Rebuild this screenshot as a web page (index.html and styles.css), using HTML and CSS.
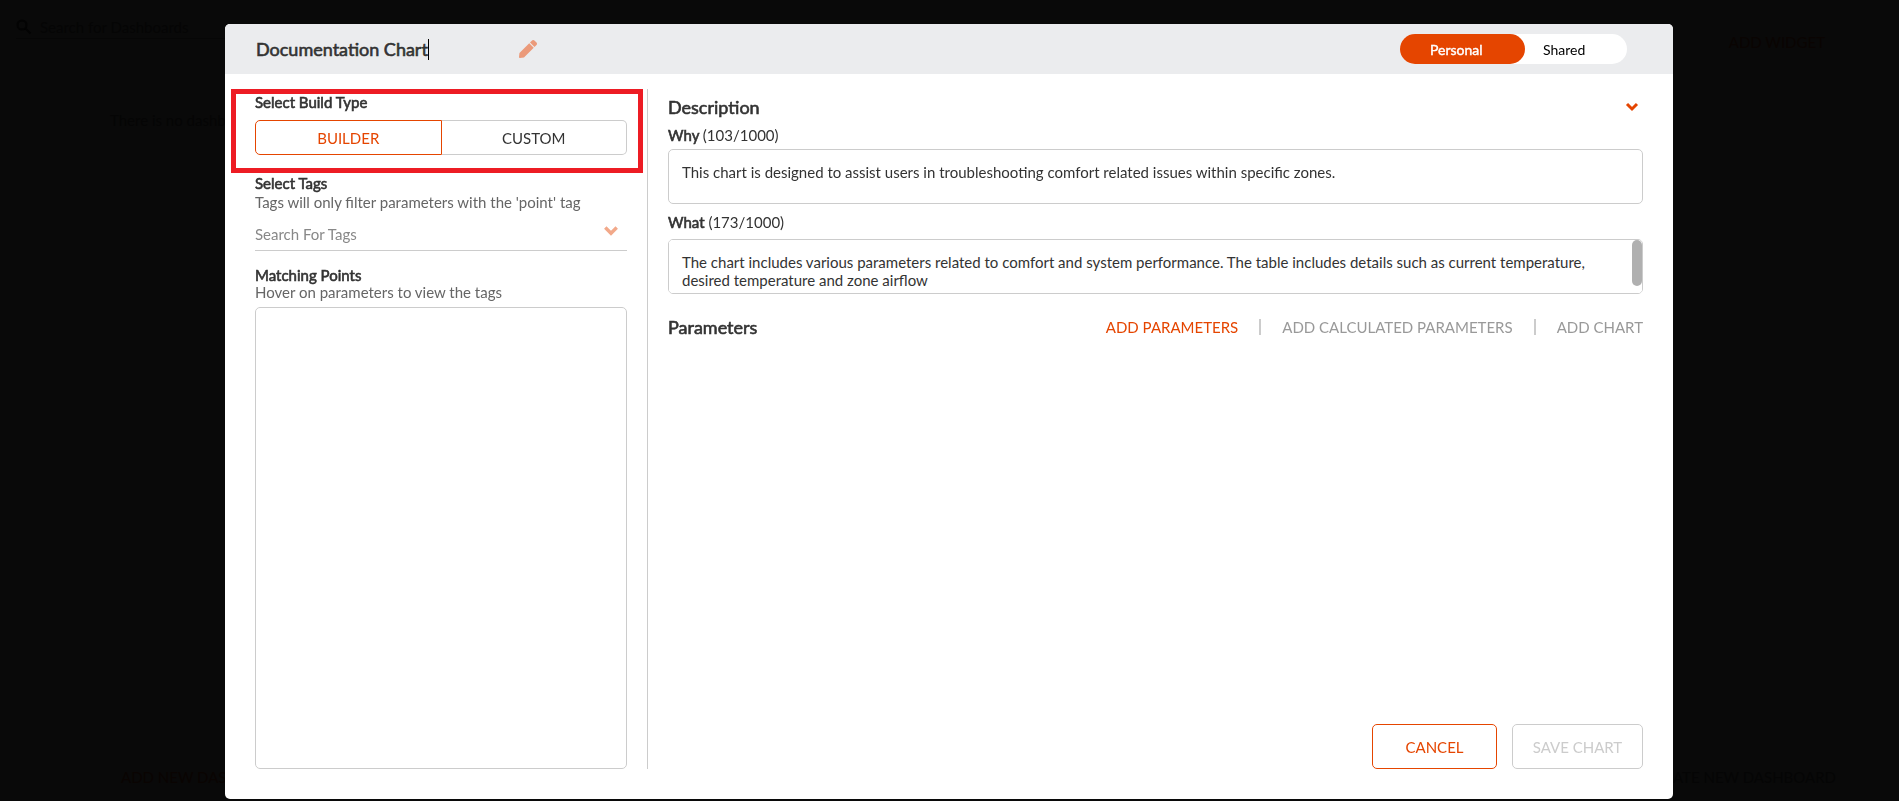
FILE: index.html
```html
<!DOCTYPE html>
<html lang="en">

<head>
    <meta charset="UTF-8" />
    <meta name="viewport" content="width=device-width, initial-scale=1.0" />
    <title>Chart Builder</title>
    <link rel="stylesheet" href="styles.css">
</head>

<body>
    <div class="page">
        <div class="page-top">
            <div class="page-search">
                <svg class="search-icon" viewBox="0 0 16 16"><circle cx="6" cy="6" r="4.5" /><path d="M9.5 9.5l5 5" /></svg>
                <span>Search for Dashboards</span>
            </div>
            <span class="add-widget">ADD WIDGET</span>
        </div>
        <p class="page-empty">There is no dashboard</p>
        <div class="page-bottom">
            <span class="page-action">ADD NEW DASHBOARD</span>
            <span>CREATE NEW DASHBOARD</span>
        </div>
    </div>

    <div class="overlay">
        <div class="modal" role="dialog" aria-label="Chart builder">
            <header class="modal-header">
                <div class="title">
                    <input class="title-input" type="text" value="Documentation Chart" aria-label="Chart name">
                    <span class="caret"></span>
                </div>
                <button class="icon-btn" aria-label="Edit name">
                    <svg class="pencil" viewBox="0 0 512 512"><path d="M291 93l128 128-278 278-114 13C11 514-2 501 0 485l13-114L291 93zm207-19l-60-60c-19-19-49-19-68 0l-57 57 128 128 57-57c19-19 19-49 0-68z" /></svg>
                </button>
                <div class="toggle">
                    <input type="radio" name="scope" id="personal" checked>
                    <label for="personal">Personal</label>
                    <input type="radio" name="scope" id="shared">
                    <label for="shared">Shared</label>
                </div>
            </header>

            <div class="modal-body">
                <aside class="sidebar">
                    <h3>Select Build Type</h3>
                    <div class="build-type">
                        <button class="build-btn active">BUILDER</button>
                        <button class="build-btn">CUSTOM</button>
                        <div class="highlight"></div>
                    </div>

                    <h3><label for="tags">Select Tags</label></h3>
                    <p class="hint tags-hint">Tags will only filter parameters with the 'point' tag</p>
                    <div class="tag-search">
                        <input type="text" id="tags" placeholder="Search For Tags">
                        <svg class="chevron light" viewBox="0 0 14 10"><path d="M2 2l5 5 5-5" /></svg>
                    </div>

                    <h3>Matching Points</h3>
                    <p class="hint">Hover on parameters to view the tags</p>
                    <div class="points"></div>
                </aside>

                <main class="content">
                    <div class="section-head">
                        <h2>Description</h2>
                        <button class="icon-btn collapse" aria-label="Collapse description">
                            <svg class="chevron small" viewBox="0 0 14 10"><path d="M2 2l5 5 5-5" /></svg>
                        </button>
                    </div>
                    <label class="field-label" for="why"><b>Why</b> (103/1000)</label>
                    <textarea id="why">This chart is designed to assist users in troubleshooting comfort related issues within specific zones.</textarea>
                    <label class="field-label what-label" for="what"><b>What</b> (173/1000)</label>
                    <div class="scroll-field">
                        <textarea id="what">The chart includes various parameters related to comfort and system performance. The table includes details such as current temperature, desired temperature and zone airflow</textarea>
                        <span class="scroll-thumb"></span>
                    </div>

                    <div class="section-head parameters">
                        <h2>Parameters</h2>
                        <div class="actions">
                            <button class="link-btn active">ADD PARAMETERS</button>
                            <span class="separator"></span>
                            <button class="link-btn">ADD CALCULATED PARAMETERS</button>
                            <span class="separator"></span>
                            <button class="link-btn">ADD CHART</button>
                        </div>
                    </div>

                    <footer class="modal-footer">
                        <button class="btn btn-cancel">CANCEL</button>
                        <button class="btn btn-save" disabled>SAVE CHART</button>
                    </footer>
                </main>
            </div>
        </div>
    </div>
</body>

</html>
```
FILE: styles.css
```css
* {
    box-sizing: border-box;
}

body {
    margin: 0;
    font-family: Lato, sans-serif;
    font-size: 15px;
    line-height: 18px;
    color: #333;
    background-color: #090909;
}

h2,
h3,
p {
    margin: 0;
}

h2,
h3,
b,
.title-input {
    font-weight: 400;
    -webkit-text-stroke: 0.6px currentColor;
}

h2 {
    font-size: 18px;
    line-height: 22px;
}

h3 {
    font-size: 15px;
}

button,
input,
textarea {
    font-family: inherit;
    font-size: inherit;
    color: inherit;
}

button {
    padding: 0;
    border: none;
    background: none;
    cursor: pointer;
}

/* Dimmed page behind the dialog */
.page {
    display: flex;
    flex-direction: column;
    height: 100vh;
    padding: 15px 16px;
    color: #050505;
}

.page-top,
.page-bottom {
    display: flex;
    justify-content: space-between;
}

.page-search {
    display: flex;
    align-items: center;
    gap: 8px;
    width: 400px;
    height: 24px;
    border-bottom: 1px solid #060606;
}

.search-icon {
    width: 16px;
    height: 16px;
    fill: none;
    stroke: #030303;
    stroke-width: 2;
}

.add-widget {
    padding: 18px 58px 0 0;
    color: #0a0402;
}

.page-empty {
    padding: 60px 94px;
}

.page-bottom {
    margin-top: auto;
    padding: 0 47px 0 105px;
}

.page-action {
    color: #0a0402;
}

.overlay {
    position: fixed;
    inset: 0;
    padding: 24px 226px 2px 225px;
}

.modal {
    display: flex;
    flex-direction: column;
    height: 100%;
    border-radius: 5px;
    background-color: #fff;
    overflow: hidden;
}

.modal-header {
    display: flex;
    align-items: center;
    height: 50px;
    padding: 0 46px 0 31px;
    background-color: #ebecee;
}

.title {
    display: flex;
    align-items: center;
    width: 263px;
}

.title-input {
    field-sizing: content;
    padding: 0;
    border: none;
    background: none;
    font-size: 18px;
    outline: none;
}

.caret {
    width: 1px;
    height: 21px;
    background-color: #000;
}

.icon-btn {
    display: flex;
}

.pencil {
    width: 18px;
    height: 18px;
    fill: #eb9a7a;
}

.toggle {
    display: flex;
    margin-left: auto;
    width: 227px;
    height: 30px;
    border-radius: 15px;
    background-color: #fff;
    font-size: 14px;
    line-height: 31px;
    color: #000;
}

.toggle input {
    position: absolute;
    opacity: 0;
}

.toggle label {
    padding: 0 18px;
    border-radius: 15px;
    cursor: pointer;
}

.toggle input:checked + label {
    width: 125px;
    padding: 0 30px;
    background-color: #e54500;
    color: #fff;
    -webkit-text-stroke: 0.4px #fff;
}

.modal-body {
    display: flex;
    flex: 1;
    min-height: 0;
    padding: 15px 30px 30px;
}

.sidebar {
    display: flex;
    flex-direction: column;
    flex: 0 0 393px;
    padding: 4px 20px 0 0;
    border-right: 1px solid #ccc;
}

.build-type {
    position: relative;
    display: flex;
    margin: 9px 0 19px;
}

.build-btn {
    flex: 1;
    height: 35px;
    border: 1px solid #ccc;
    border-left: none;
    border-radius: 0 5px 5px 0;
}

.build-btn.active {
    border: 1px solid #e54500;
    border-radius: 5px 0 0 5px;
    color: #e54500;
}

.highlight {
    position: absolute;
    inset: -31px -16px -18px -24px;
    border: 5px solid #ed1c24;
    pointer-events: none;
}

.hint {
    line-height: 16px;
    color: #666;
}

.tags-hint {
    margin-top: 2px;
}

.tag-search {
    display: flex;
    align-items: center;
    height: 41px;
    margin-bottom: 15px;
    padding: 7px 8px 0 0;
    border-bottom: 1px solid #ccc;
}

.tag-search input {
    flex: 1;
    padding: 0;
    border: none;
    outline: none;
}

.tag-search input::placeholder {
    color: #888;
}

.chevron {
    width: 14px;
    height: 10px;
    fill: none;
    stroke: #e54500;
    stroke-width: 3;
}

.chevron.light {
    width: 16px;
    height: 12px;
    margin-bottom: 5px;
    stroke: #f2a98a;
}

.points {
    flex: 1;
    margin-top: 7px;
    border: 1px solid #ccc;
    border-radius: 5px;
}

.content {
    display: flex;
    flex-direction: column;
    flex: 1;
    min-width: 0;
    padding: 7px 0 0 20px;
}

.section-head {
    display: flex;
    align-items: center;
    justify-content: space-between;
}

.collapse {
    padding-right: 4px;
}

.field-label {
    margin: 8px 0 5px;
}

.what-label {
    margin: 9px 0 8px;
}

textarea {
    display: block;
    width: 100%;
    height: 55px;
    padding: 13px 13px 14px;
    border: 1px solid #ccc;
    border-radius: 5px;
    line-height: 18px;
    resize: none;
    outline: none;
}

.scroll-field {
    position: relative;
}

.scroll-thumb {
    position: absolute;
    top: 1px;
    right: 1px;
    width: 10px;
    height: 46px;
    border-radius: 5px;
    background-color: #b0b0b0;
}

.parameters {
    margin-top: 22px;
}

.actions {
    display: flex;
    align-items: center;
    gap: 21px;
}

.link-btn {
    color: #999;
}

.link-btn.active {
    color: #e54500;
}

.separator {
    width: 2px;
    height: 16px;
    background-color: #ccc;
}

.modal-footer {
    display: flex;
    justify-content: flex-end;
    gap: 15px;
    margin-top: auto;
}

.btn {
    height: 45px;
    border: 1px solid #ccc;
    border-radius: 5px;
}

.btn-cancel {
    width: 125px;
    border-color: #e54500;
    color: #e54500;
}

.btn-save {
    width: 131px;
    color: #ccc;
    cursor: default;
}
```
